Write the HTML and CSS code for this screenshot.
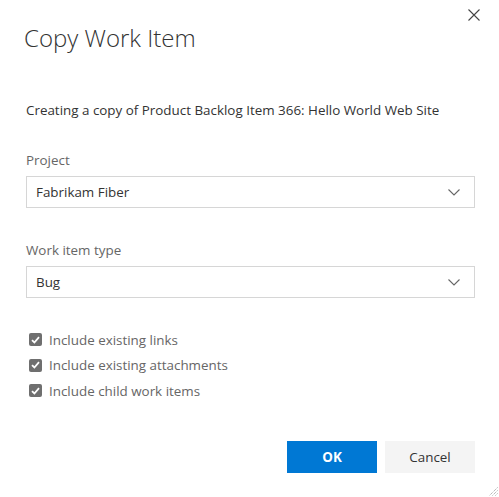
FILE: index.html
```html
<!DOCTYPE html>
<html lang="en">
<head>
<meta charset="utf-8">
<title>Copy Work Item</title>
<link rel="stylesheet" href="styles.css">
</head>
<body>
<div class="dialog">
  <div class="header">
    <h1 class="title">Copy Work Item</h1>
    <button class="close" aria-label="Close">
      <svg width="12" height="12" viewBox="0 0 12 12"><path d="M0.5 0.5 L11.5 11.5 M11.5 0.5 L0.5 11.5" stroke="#444" stroke-width="1.1" fill="none"/></svg>
    </button>
  </div>
  <p class="intro">Creating a copy of Product Backlog Item 366: Hello World Web Site</p>

  <div class="field">
    <label class="label">Project</label>
    <div class="select">
      <span class="value">Fabrikam Fiber</span>
      <svg class="chevron" width="12" height="7" viewBox="0 0 12 7"><path d="M0.5 0.5 L6 6 L11.5 0.5" stroke="#666" stroke-width="1.1" fill="none"/></svg>
    </div>
  </div>

  <div class="field">
    <label class="label">Work item type</label>
    <div class="select">
      <span class="value">Bug</span>
      <svg class="chevron" width="12" height="7" viewBox="0 0 12 7"><path d="M0.5 0.5 L6 6 L11.5 0.5" stroke="#666" stroke-width="1.1" fill="none"/></svg>
    </div>
  </div>

  <div class="checks">
    <div class="check">
      <span class="box"><svg width="9" height="8" viewBox="0 0 9 8"><path d="M1 4.2 L3.4 6.5 L8 1.2" stroke="#fff" stroke-width="1.8" fill="none"/></svg></span>
      <span>Include existing links</span>
    </div>
    <div class="check">
      <span class="box"><svg width="9" height="8" viewBox="0 0 9 8"><path d="M1 4.2 L3.4 6.5 L8 1.2" stroke="#fff" stroke-width="1.8" fill="none"/></svg></span>
      <span>Include existing attachments</span>
    </div>
    <div class="check">
      <span class="box"><svg width="9" height="8" viewBox="0 0 9 8"><path d="M1 4.2 L3.4 6.5 L8 1.2" stroke="#fff" stroke-width="1.8" fill="none"/></svg></span>
      <span>Include child work items</span>
    </div>
  </div>

  <div class="footer">
    <button class="btn primary">OK</button>
    <button class="btn secondary">Cancel</button>
  </div>

  <svg class="grip" width="10" height="10" viewBox="0 0 10 10"><path d="M9.5 1.5 L1.5 9.5 M9.5 4.5 L4.5 9.5 M9.5 7.5 L7.5 9.5" stroke="#999" stroke-width="1" stroke-dasharray="1 1" fill="none"/></svg>
</div>
</body>
</html>
```
FILE: styles.css
```css
* { box-sizing: border-box; }
html, body { margin: 0; padding: 0; background: #fff; }
body {
  font-family: "Open Sans", "Noto Sans", sans-serif;
  font-size: 13.4px;
  color: #333;
}
.dialog {
  position: relative;
  width: 499px;
  height: 497px;
  padding: 0 24px 0 26px;
}
.header {
  display: flex;
  justify-content: space-between;
  align-items: flex-start;
}
.title {
  margin: 20px 0 0 -2px;
  font-size: 24px;
  font-weight: 300;
  line-height: 36px;
  color: #333;
}
.close {
  margin: 9px -5px 0 0;
  padding: 0;
  border: 0;
  background: none;
  width: 12px;
  height: 12px;
  display: flex;
}
.intro {
  margin: 44px 0 0 0;
  line-height: 20px;
}
.field { margin-top: 30px; }
.field + .field { margin-top: 32px; }
.label {
  display: block;
  color: #666;
  line-height: 20px;
}
.select {
  margin-top: 6px;
  height: 32px;
  border: 1px solid #d6d6d6;
  display: flex;
  align-items: center;
  justify-content: space-between;
  padding: 0 14px 0 9px;
}
.value { color: #333; }
.checks { margin-top: 29px; }
.check {
  display: flex;
  align-items: center;
  height: 25.5px;
  color: #666;
}
.box {
  width: 13px;
  height: 13px;
  margin: 0 7px 0 3px;
  border-radius: 2px;
  background: #6f6f6f;
  display: flex;
  align-items: center;
  justify-content: center;
}
.footer {
  margin-top: 37px;
  display: flex;
  justify-content: flex-end;
  gap: 8px;
}
.btn {
  width: 90px;
  height: 32px;
  border: 0;
  font-family: inherit;
  font-size: 13.4px;
}
.primary {
  background: #0078d4;
  color: #fff;
  font-weight: 700;
}
.secondary {
  background: #f4f4f4;
  color: #333;
}
.grip {
  position: absolute;
  right: 1px;
  bottom: 1px;
}
```
